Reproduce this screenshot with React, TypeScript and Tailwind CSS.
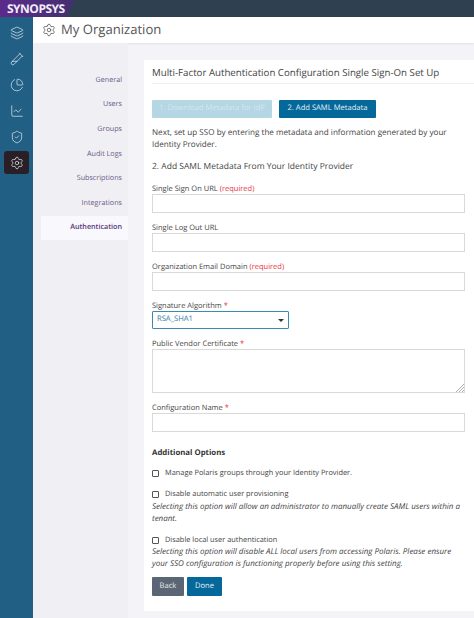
import React from "react";
import { Layers, TestTubeDiagonal, ChartPie, ChartLine, ShieldCheck, Settings } from "lucide-react";

const nav = ["General", "Users", "Groups", "Audit Logs", "Subscriptions", "Integrations", "Authentication"];

function Label({ text, req }: { text: string; req?: "word" | "star" }) {
  return (
    <div className="text-[7.5px] leading-[10px] text-[#444]">
      {text}
      {req === "word" && <span className="text-[#e5343d]"> (required)</span>}
      {req === "star" && <span className="text-[#e5343d]"> *</span>}
    </div>
  );
}

function Field({ text, req, mt }: { text: string; req?: "word" | "star"; mt: string }) {
  return (
    <div className={mt}>
      <Label text={text} req={req} />
      <div className="h-[19px] w-[313px] border border-[#d9d9d9] bg-white" />
    </div>
  );
}

function Check({ text, mt }: { text: string; mt: string }) {
  return (
    <div className={`${mt} flex items-center gap-[6px] text-[7.4px] leading-[12px] text-[#444]`}>
      <span className="h-[7px] w-[7px] rounded-[1px] border border-[#555] bg-white" />
      {text}
    </div>
  );
}

export default function App() {
  return (
    <div className="flex h-[618px] w-[474px] flex-col overflow-hidden bg-[#f3f3f8] font-['Open_Sans','Noto_Sans',sans-serif] [text-rendering:geometricPrecision]">
      <div className="flex h-[17px] shrink-0 bg-[#2f4051]">
        <div className="flex h-full w-[75px] items-center bg-gradient-to-r from-[#5b2a8c] to-[#43306f] pl-[7px] pt-[1px] text-[12px] font-bold leading-none tracking-[-0.5px] text-[#f2ecf7] [clip-path:polygon(0_0,100%_0,88%_100%,0_100%)]">
          SYNOPSYS
        </div>
      </div>
      <div className="flex min-h-0 flex-1">
        <div className="flex w-[33px] shrink-0 flex-col items-center bg-[#215f85] pt-[9px] text-[#e6eef3]">
          <Layers size={14} strokeWidth={1.2} />
          <TestTubeDiagonal size={14} strokeWidth={1.2} className="mt-[12px]" />
          <ChartPie size={14} strokeWidth={1.2} className="mt-[12px]" />
          <ChartLine size={14} strokeWidth={1.2} className="mt-[12px]" />
          <ShieldCheck size={14} strokeWidth={1.2} className="mt-[12px]" />
          <div className="mt-[7px] flex h-[23px] w-[25px] items-center justify-center rounded-[3px] bg-[#2a1f26]">
            <Settings size={14} strokeWidth={1.2} />
          </div>
        </div>
        <div className="flex min-w-0 flex-1 flex-col">
          <div className="flex h-[26px] shrink-0 items-center gap-[5px] bg-white pl-[9px] shadow-[0_1px_2px_rgba(0,0,0,0.08)]">
            <Settings size={14} strokeWidth={1.2} className="text-[#444]" />
            <span className="text-[13.1px] leading-none text-[#555]">My Organization</span>
          </div>
          <div className="flex min-h-0 flex-1">
            <div className="w-[95px] shrink-0 bg-[#f0eff4] pl-[8px] pt-[25px]">
              {nav.map((n) => (
                <div
                  key={n}
                  className={`flex h-[24.6px] items-center justify-end pr-[6px] text-[7.2px] ${
                    n === "Authentication" ? "bg-[#f9f8fc] font-semibold text-[#54377a]" : "text-[#6c5a86]"
                  }`}
                >
                  {n}
                </div>
              ))}
            </div>
            <div className="min-w-0 flex-1 pl-[16px] pt-[17px]">
              <div className="h-[551px] bg-white pl-[8px] pt-[6px]">
                <div className="h-[18px] border-b border-[#eee] text-[9.7px] leading-[14px] text-[#444]">
                  Multi-Factor Authentication Configuration Single Sign-On Set Up
                </div>
                <div className="mt-[16px] flex gap-[7px]">
                  <div className="flex h-[18px] w-[120px] items-center justify-center rounded-[1px] bg-[#b5d6e3] text-[7.6px] text-[#d3e7ef]">
                    1. Download Metadata for IdP
                  </div>
                  <div className="flex h-[18px] w-[97px] items-center justify-center rounded-[1px] bg-[#05689b] text-[7.6px] text-[#e6f0f5]">
                    2. Add SAML Metadata
                  </div>
                </div>
                <p className="mt-[9px] w-[310px] text-[8.1px] leading-[12px] text-[#444]">
                  Next, set up SSO by entering the metadata and information generated by your Identity Provider.
                </p>
                <div className="mt-[9px] text-[8.5px] leading-[13px] text-[#444]">
                  2. Add SAML Metadata From Your Identity Provider
                </div>
                <Field text="Single Sign On URL" req="word" mt="mt-[11px]" />
                <Field text="Single Log Out URL" mt="mt-[10px]" />
                <Field text="Organization Email Domain" req="word" mt="mt-[10px]" />
                <div className="mt-[10px]">
                  <Label text="Signature Algorithm" req="star" />
                  <div className="flex h-[18px] w-[137px] items-center justify-between rounded-[1px] border border-[#3b8bb0] bg-white pl-[4px] pr-[4px] text-[7.6px] text-[#2f7ea6]">
                    RSA_SHA1
                    <span className="h-0 w-0 border-x-[3px] border-t-[3px] border-x-transparent border-t-[#333]" />
                  </div>
                </div>
                <div className="mt-[10px]">
                  <Label text="Public Vendor Certificate" req="star" />
                  <div className="relative h-[44px] w-[313px] border border-[#d9d9d9] bg-white">
                    <svg className="absolute bottom-0 right-0" width="9" height="9" viewBox="0 0 9 9" stroke="#888" strokeWidth="0.7">
                      <path d="M1 9L9 1M4 9L9 4M7 9L9 7" />
                    </svg>
                  </div>
                </div>
                <Field text="Configuration Name" req="star" mt="mt-[10px]" />
                <div className="mt-[15px] text-[7.8px] font-bold leading-[12px] text-[#333]">Additional Options</div>
                <Check text="Manage Polaris groups through your Identity Provider." mt="mt-[8px]" />
                <Check text="Disable automatic user provisioning" mt="mt-[9px]" />
                <p className="mt-[1px] w-[316px] text-[8px] italic leading-[12px] text-[#444]">
                  Selecting this option will allow an administrator to manually create SAML users within a tenant.
                </p>
                <Check text="Disable local user authentication" mt="mt-[9px]" />
                <p className="w-[316px] text-[8px] italic leading-[12px] text-[#444]">
                  Selecting this option will disable ALL local users from accessing Polaris. Please ensure your SSO configuration is functioning properly before using this setting.
                </p>
                <div className="mt-[7px] flex gap-[3px]">
                  <div className="flex h-[19px] w-[32px] items-center justify-center rounded-[1px] bg-[#5b6675] text-[7.6px] text-[#e6e8eb]">Back</div>
                  <div className="flex h-[19px] w-[35px] items-center justify-center rounded-[1px] bg-[#05689b] text-[7.6px] text-[#e6f0f5]">Done</div>
                </div>
              </div>
            </div>
          </div>
        </div>
      </div>
    </div>
  );
}
